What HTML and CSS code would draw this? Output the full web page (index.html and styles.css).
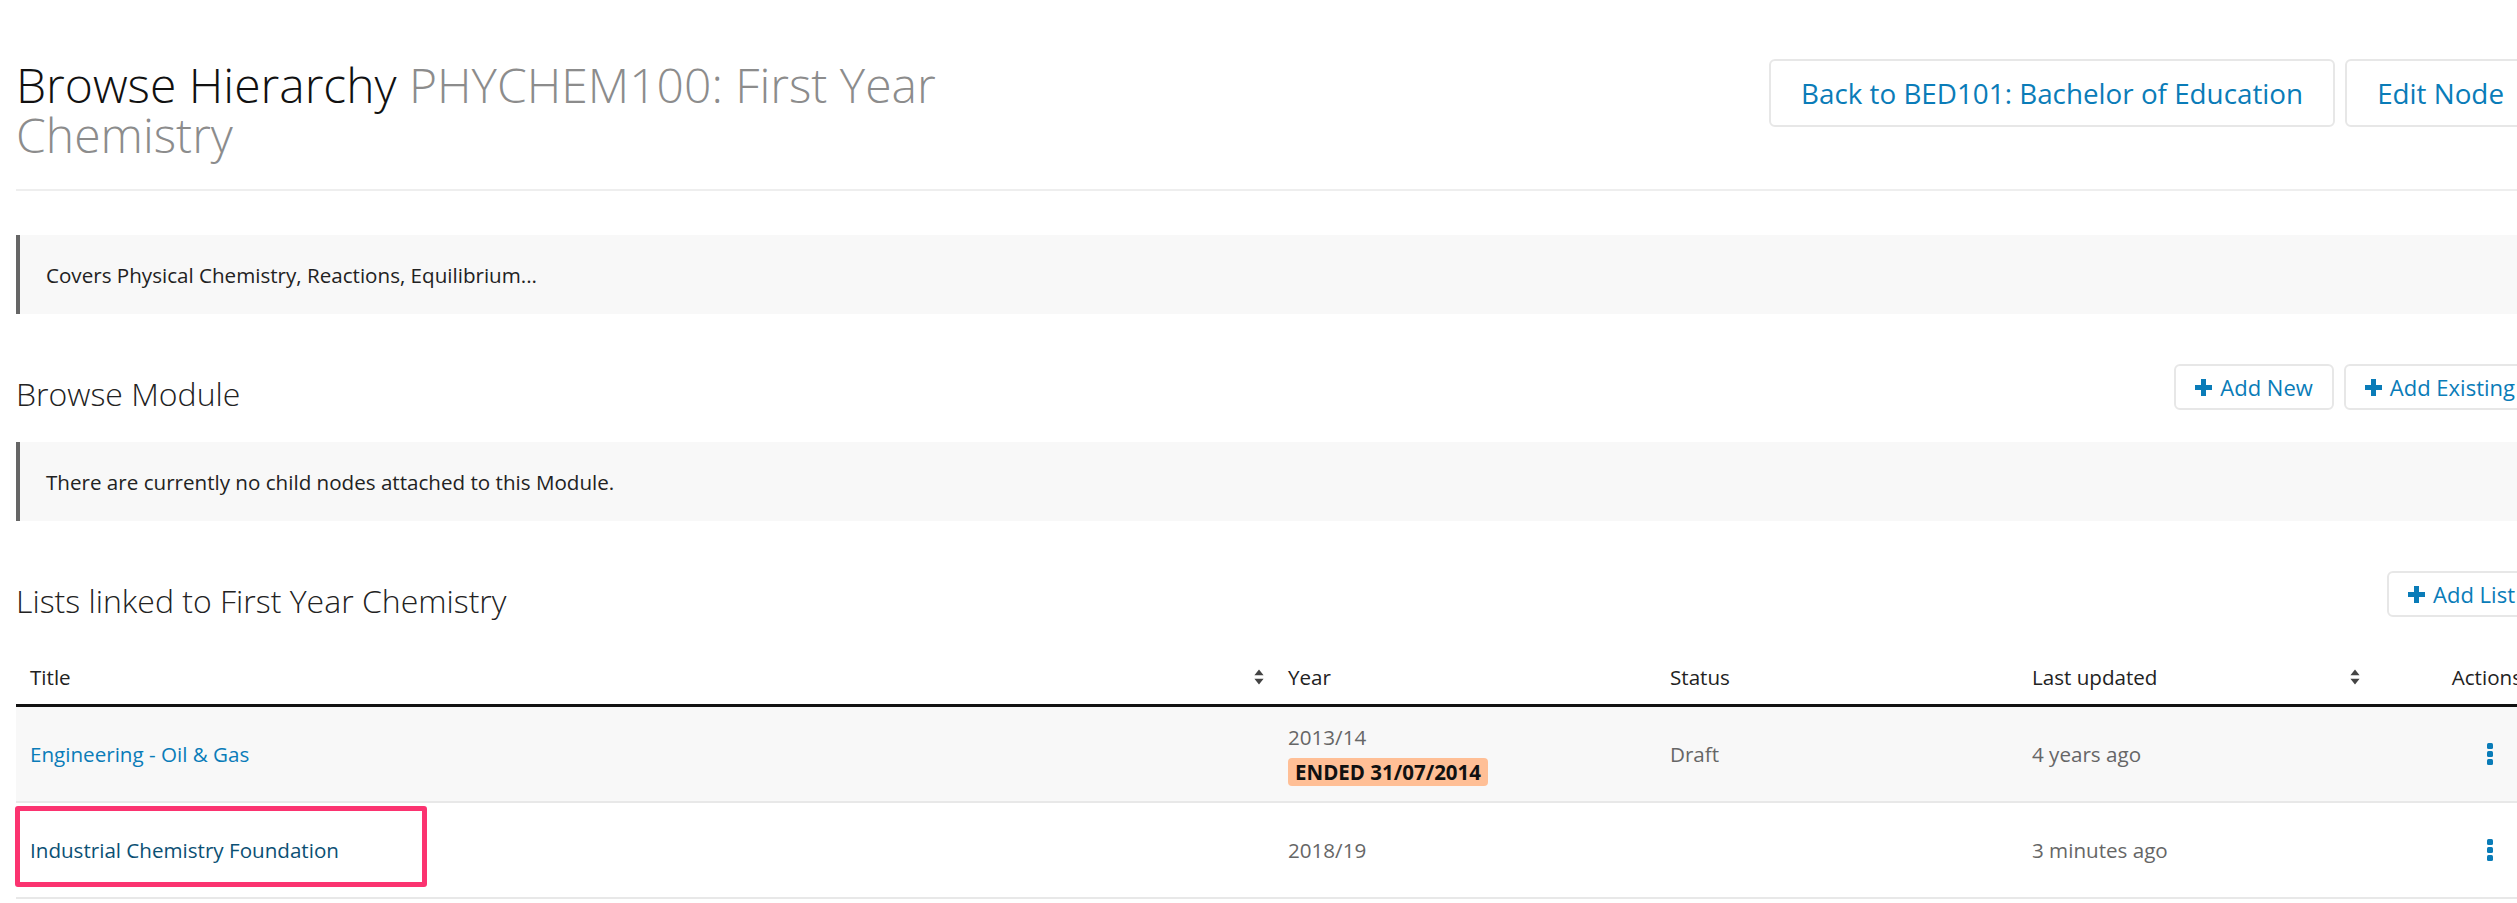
FILE: index.html
```html
<!DOCTYPE html>
<html lang="en">
<head>
<meta charset="utf-8">
<title>Browse Hierarchy</title>
<link rel="stylesheet" href="styles.css">
</head>
<body>
<div class="page">
  <header class="page-header">
    <h1 class="page-title">Browse Hierarchy <span class="page-subtitle">PHYCHEM100: First Year Chemistry</span></h1>
    <div class="btn-group">
      <a class="btn btn-lg" href="#">Back to BED101: Bachelor of Education</a>
      <a class="btn btn-lg" href="#">Edit Node</a>
    </div>
  </header>
  <hr class="divider">

  <div class="note">Covers Physical Chemistry, Reactions, Equilibrium...</div>

  <div class="section-head">
    <h2 class="section-title">Browse Module</h2>
    <div class="btn-group">
      <a class="btn" href="#"><svg class="icon-plus" viewBox="0 0 17 17" width="17" height="17"><path d="M6 0h5v6h6v5h-6v6H6v-6H0V6h6z"/></svg>Add New</a>
      <a class="btn" href="#"><svg class="icon-plus" viewBox="0 0 17 17" width="17" height="17"><path d="M6 0h5v6h6v5h-6v6H6v-6H0V6h6z"/></svg>Add Existing</a>
    </div>
  </div>

  <div class="note">There are currently no child nodes attached to this Module.</div>

  <div class="section-head section-head--lists">
    <h2 class="section-title">Lists linked to First Year Chemistry</h2>
    <div class="btn-group">
      <a class="btn" href="#"><svg class="icon-plus" viewBox="0 0 17 17" width="17" height="17"><path d="M6 0h5v6h6v5h-6v6H6v-6H0V6h6z"/></svg>Add List</a>
    </div>
  </div>

  <div class="list-table">
    <div class="lt-row lt-head">
      <div class="lt-cell lt-sort">Title <svg class="icon-sort" viewBox="0 0 10 16" width="10" height="16"><path d="M5 0.5L9.6 6.3H0.4z M5 15.5L0.4 9.7H9.6z"/></svg></div>
      <div class="lt-cell">Year</div>
      <div class="lt-cell">Status</div>
      <div class="lt-cell lt-sort">Last updated <svg class="icon-sort" viewBox="0 0 10 16" width="10" height="16"><path d="M5 0.5L9.6 6.3H0.4z M5 15.5L0.4 9.7H9.6z"/></svg></div>
      <div class="lt-cell lt-actions">Actions</div>
    </div>

    <div class="lt-row lt-body lt-body--striped">
      <div class="lt-cell"><a class="link" href="#">Engineering - Oil &amp; Gas</a></div>
      <div class="lt-cell lt-year">
        <span>2013/14</span>
        <span class="badge">ENDED 31/07/2014</span>
      </div>
      <div class="lt-cell">Draft</div>
      <div class="lt-cell">4 years ago</div>
      <div class="lt-cell lt-kebab"><svg class="icon-kebab" viewBox="0 0 6 22" width="6" height="22"><rect x="0" y="0" width="6" height="6" rx="1.5"/><rect x="0" y="8" width="6" height="6" rx="1.5"/><rect x="0" y="16" width="6" height="6" rx="1.5"/></svg></div>
    </div>

    <div class="lt-row lt-body lt-body--marked">
      <div class="lt-cell"><a class="link link--visited" href="#">Industrial Chemistry Foundation</a></div>
      <div class="lt-cell">2018/19</div>
      <div class="lt-cell"></div>
      <div class="lt-cell">3 minutes ago</div>
      <div class="lt-cell lt-kebab"><svg class="icon-kebab" viewBox="0 0 6 22" width="6" height="22"><rect x="0" y="0" width="6" height="6" rx="1.5"/><rect x="0" y="8" width="6" height="6" rx="1.5"/><rect x="0" y="16" width="6" height="6" rx="1.5"/></svg></div>
      <div class="highlight"></div>
    </div>
  </div>
</div>
</body>
</html>
```

FILE: styles.css
```css
* { box-sizing: border-box; }

html, body {
  margin: 0;
  overflow: hidden;
  background: #fff;
}

body {
  font-family: "Open Sans", "Noto Sans", "Liberation Sans", sans-serif;
  font-size: 20.6px;
  line-height: 30px;
  color: #222;
}

.page {
  width: 2520px;
  margin-left: 16px;
}

/* header */
.page-header {
  display: flex;
  justify-content: space-between;
  align-items: flex-start;
  padding-top: 59px;
}

.page-title {
  margin: 1px 0 0;
  max-width: 1000px;
  font-size: 48px;
  font-weight: 300;
  line-height: 50px;
  color: #111;
}

.page-subtitle { color: #8c8c8c; }

.btn-group {
  display: flex;
  gap: 10px;
  flex: none;
}

.btn {
  display: inline-flex;
  align-items: center;
  gap: 8px;
  height: 46px;
  padding: 0 19px;
  border: 2px solid #e7e7e7;
  border-radius: 6px;
  background: #fff;
  color: #0a7cb8;
  font-size: 22px;
  text-decoration: none;
  white-space: nowrap;
}

.btn-lg {
  height: 68px;
  padding: 0 30px;
  font-size: 27.8px;
}

.icon-plus { fill: #0a7cb8; flex: none; }

.divider {
  margin: 29px 0 44px;
  height: 0;
  border: 0;
  border-top: 2px solid #eee;
}

/* note boxes */
.note {
  display: flex;
  align-items: center;
  height: 79px;
  padding: 0 26px;
  border-left: 4px solid #666;
  background: #f8f8f8;
  color: #222;
}

/* section headings */
.section-head {
  display: flex;
  justify-content: space-between;
  align-items: flex-start;
  margin: 50px 0 25px;
}

.section-head--lists { margin-bottom: 22px; }

.section-title {
  margin: 0;
  padding-top: 7px;
  font-size: 32px;
  font-weight: 300;
  line-height: 46px;
  color: #222;
}

/* table */
.lt-row {
  display: grid;
  grid-template-columns: 1258px 382px 362px 352px 166px;
}

.lt-head {
  height: 61px;
  padding-top: 16px;
  align-items: start;
  border-bottom: 3px solid #111;
  color: #222;
}

.lt-cell {
  display: flex;
  align-items: center;
  padding: 0 14px;
  min-width: 0;
  white-space: nowrap;
}

.lt-sort {
  justify-content: space-between;
  padding-right: 10px;
}

.icon-sort { fill: #444; flex: none; }

.lt-actions {
  justify-content: flex-end;
  padding-right: 14px;
}

.lt-body {
  position: relative;
  height: 96px;
  border-bottom: 2px solid #e8e8e8;
  color: #666;
}

.lt-body--striped { background: #f8f8f8; }

.lt-year {
  flex-direction: column;
  align-items: flex-start;
  justify-content: center;
}

.badge {
  display: inline-block;
  margin-top: 6px;
  padding: 0 7px;
  height: 28px;
  line-height: 28px;
  border-radius: 4px;
  background: #ffbf96;
  color: #111;
  font-weight: 700;
  font-size: 20.5px;
}

.lt-kebab {
  justify-content: flex-end;
  padding-right: 43px;
}

.icon-kebab { fill: #0a7cb8; }

.link {
  color: #0a7cb8;
  text-decoration: none;
}

.link--visited { color: #0b5074; }

.highlight {
  position: absolute;
  left: -1px;
  top: 3px;
  width: 412px;
  height: 81px;
  border: 5px solid #fb3370;
  border-radius: 3px;
  pointer-events: none;
}
```
